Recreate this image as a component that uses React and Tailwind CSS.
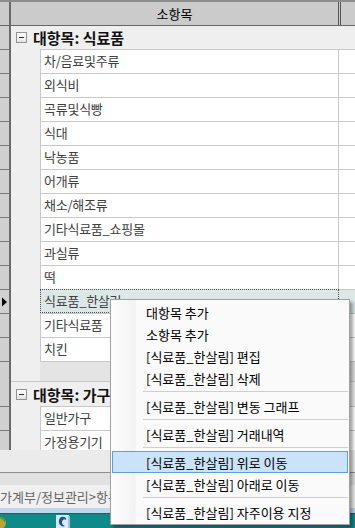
import React from "react";

const FONT = "font-['Noto_Sans_CJK_KR','Noto_Sans',sans-serif]";

function RowHead({ selected, border = true }) {
  return (
    <div
      className={`w-[11px] shrink-0 bg-[#d0d0d0] border-r-2 border-r-[#6a6a6a] ${
        border ? "border-t border-t-[#7c7c7c]" : ""
      } flex items-center`}
    >
      {selected && (
        <svg width="9" height="10" viewBox="0 0 9 10">
          <path d="M2 0.5 L7 5 L2 9.5 Z" fill="#000" />
        </svg>
      )}
    </div>
  );
}

function DataRow({ label, selected }) {
  return (
    <div className="flex h-[24px] shrink-0">
      <RowHead selected={selected} />
      <div className="w-[29px] shrink-0 bg-[#efefef]" />
      {selected ? (
        <div className="w-[299px] shrink-0 bg-[#dce8e8] border border-dotted border-[#505050] flex items-center pl-[3px] pb-[2px]">
          <span className="text-[13px] tracking-[-0.25px] text-[#404040] leading-none">{label}</span>
        </div>
      ) : (
        <div className="w-[299px] shrink-0 bg-white border-t border-l border-r border-[#c8c8c8] flex items-center pl-[3px] pb-[2px]">
          <span className="text-[13px] tracking-[-0.25px] text-[#404040] leading-none">{label}</span>
        </div>
      )}
      <div
        className={`flex-1 border-t border-[#c8c8c8] ${selected ? "bg-[#dce8e8]" : "bg-white"}`}
      />
    </div>
  );
}

function GroupRow({ label, h }) {
  return (
    <div className={`flex shrink-0 ${h}`}>
      <RowHead border={false} />
      <div className="flex-1 bg-[#efefef] flex items-center pl-[5px]">
        <div className="w-[11px] h-[11px] border border-[#939393] bg-[linear-gradient(to_bottom,#ffffff,#e4e4e4)] flex items-center justify-center">
          <div className="w-[5px] h-px bg-[#333]" />
        </div>
        <span className="ml-[6px] text-[15px] font-bold text-[#111] leading-none">{label}</span>
      </div>
    </div>
  );
}

function MenuItem({ children, active }) {
  return (
    <div
      className={`mx-[1px] h-[22px] flex items-center pl-[33px] border ${
        active ? "bg-[#cbe3f8] border-[#5b9fe3]" : "border-transparent"
      }`}
    >
      <span className="text-[13px] text-black leading-none whitespace-nowrap">{children}</span>
    </div>
  );
}

function Sep() {
  return (
    <div className="h-[6px] pt-[2px] pl-[32px] pr-[1px]">
      <div className="h-px bg-[#cfcfcf]" />
    </div>
  );
}

export default function App() {
  const rows = [
    "차/음료및주류",
    "외식비",
    "곡류및식빵",
    "식대",
    "낙농품",
    "어개류",
    "채소/해조류",
    "기타식료품_쇼핑몰",
    "과실류",
    "떡",
  ];
  return (
    <div className={`relative w-[355px] h-[528px] overflow-hidden bg-[#ebebeb] ${FONT}`}>
      {/* grid */}
      <div className="flex flex-col h-[450px] overflow-hidden bg-[#efefef]">
        {/* header */}
        <div className="flex h-[26px] shrink-0 bg-[#cbcbcb] border-t-2 border-t-[#8c8c8c] border-b border-b-[#666]">
          <div className="w-[11px] shrink-0 border-r-2 border-r-[#6a6a6a]" />
          <div className="w-[328px] shrink-0 border-r border-r-[#555] flex items-center justify-center">
            <span className="text-[13px] text-black leading-none">소항목</span>
          </div>
          <div className="w-px shrink-0 bg-[#cbcbcb]" />
          <div className="flex-1 border-l border-l-[#555]" />
        </div>

        <GroupRow label="대항목: 식료품" h="h-[23px]" />
        {rows.map((r) => (
          <DataRow key={r} label={r} />
        ))}
        <DataRow label="식료품_한살림" selected />
        <DataRow label="기타식료품" />
        <DataRow label="치킨" />

        {/* group footer */}
        <div className="flex h-[21px] shrink-0">
          <RowHead />
          <div className="flex-1 flex border-b border-b-[#c8c8c8]">
            <div className="w-[29px] shrink-0 bg-[#efefef]" />
            <div className="flex-1 bg-[#e4e4e4] border-t border-[#c8c8c8]" />
          </div>
        </div>

        <GroupRow label="대항목: 가구" h="h-[24px]" />
        <DataRow label="일반가구" />
        <DataRow label="가정용기기" />
      </div>

      {/* bottom */}
      <div className="h-[22px] bg-[#ebebeb]" />
      <div className="h-px bg-[#8e8e8e]" />
      <div className="h-[12px] bg-[#e1e1e1]" />
      <div className="h-[23px] bg-[#f0f0f0] flex items-center">
        <span className="text-[13px] text-[#666] leading-none whitespace-nowrap">가계부/정보관리&gt;항목관리</span>
      </div>
      <div className="h-[5px] bg-[#bfd6ee]" />
      <div className="h-[15px] bg-[#0e8b88] border-t border-t-[#1d5e5c] flex items-end">
        <svg width="8" height="14" viewBox="0 0 8 14">
          <circle cx="0" cy="9" r="6" fill="#b6a832" />
          <path d="M0 4 A6 6 0 0 1 5 8" stroke="#6e8a2a" strokeWidth="1.5" fill="none" />
        </svg>
        <svg width="16" height="14" viewBox="0 0 16 14" className="ml-[47px]">
          <rect x="1" y="1" width="13" height="13" fill="#dbe9f6" />
          <path d="M11 4 C7 1 3 4 4 9 C5 12 8 13 10 12 C7 11 6 8 8 6 C9 5 10 5 11 6 Z" fill="#1d4f9a" />
          <rect x="13" y="2" width="2" height="12" fill="#9cc2e6" />
        </svg>
      </div>

      {/* context menu */}
      <div className="absolute left-[110px] top-[299px] w-[240px] border border-[#a0a0a0] bg-[linear-gradient(to_right,#fdfdfd_0px,#f2f2f2_24px,#fafafa_25px)] pt-[1px] pb-[1px] shadow-[3px_3px_3px_rgba(0,0,0,0.35)]">
        <MenuItem>대항목 추가</MenuItem>
        <MenuItem>소항목 추가</MenuItem>
        <MenuItem>[식료품_한살림] 편집</MenuItem>
        <MenuItem>[식료품_한살림] 삭제</MenuItem>
        <Sep />
        <MenuItem>[식료품_한살림] 변동 그래프</MenuItem>
        <Sep />
        <MenuItem>[식료품_한살림] 거래내역</MenuItem>
        <Sep />
        <MenuItem active>[식료품_한살림] 위로 이동</MenuItem>
        <MenuItem>[식료품_한살림] 아래로 이동</MenuItem>
        <Sep />
        <MenuItem>[식료품_한살림] 자주이용 지정</MenuItem>
      </div>
    </div>
  );
}
